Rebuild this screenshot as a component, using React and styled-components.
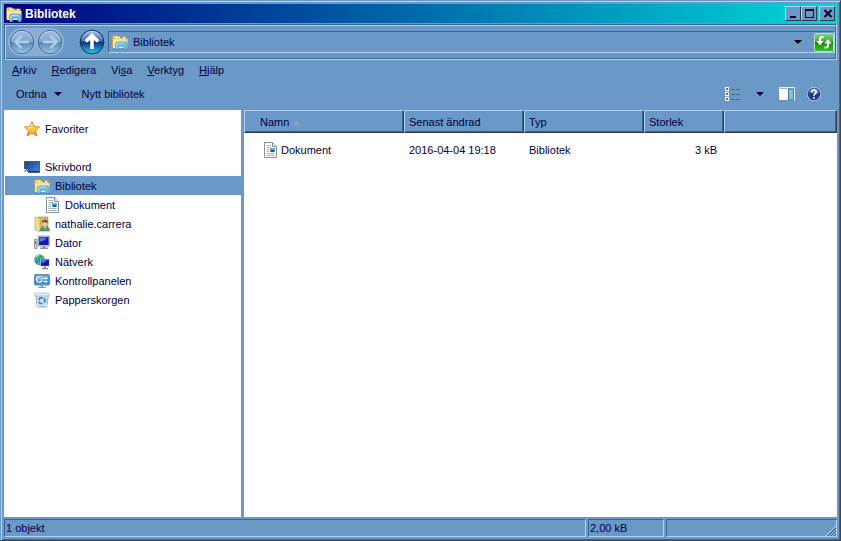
import React, { useState } from 'react';
import styled, { createGlobalStyle } from 'styled-components';

//////////////////////////////////////////////////

const FolderIcon = ({ size = 16 }) => (
  <svg width={size} height={size} viewBox="0 0 16 16" aria-hidden="true">
    <path d="M.5 2.5 L1.5 1.5 H6 L7.5 3 H14.5 V13 H.5 Z" fill="#e3c567" stroke="#b99a45" strokeWidth=".6" />
    <path d="M1 5 H15.5 V14 H1 Z" fill="#f6e79d" />
    <path d="M3 3.5 H13" stroke="#fffbe0" strokeWidth="1.2" />
    <path d="M8 3.5 H11" stroke="#5aa55a" strokeWidth="1" />
    <path d="M3.5 15.5 V10.5 Q3.5 8 6 8 H12.5 Q15 8 15 10.5 V15.5 H12 V12 H6.5 V15.5 Z" fill="#6fc0ea" stroke="#3f92c4" strokeWidth=".7" />
    <path d="M4.7 14.5 V11 Q4.8 9.2 7 9.2 H12" fill="none" stroke="#d6f1ff" strokeWidth=".8" />
  </svg>
);

const DocumentIcon = () => (
  <svg width="16" height="16" viewBox="0 0 16 16" aria-hidden="true">
    <path d="M2.5 .5 H10.5 L14.5 4.5 V15.5 H2.5 Z" fill="#fff" stroke="#8a8f94" />
    <path d="M10.5 .5 V4.5 H14.5" fill="#dfe5ea" stroke="#8a8f94" />
    <path d="M4.5 3.5 H9 M4.5 5.5 H9 M4.5 7.5 H7 M4.5 9.5 H7 M4.5 11.5 H12.5 M4.5 13.5 H12.5" stroke="#9fb2bd" />
    <path d="M8 6 H13 V10 H8 Z" fill="#5ba7df" />
    <path d="M9 8 H12 V10 H9 Z" fill="#1d5493" />
  </svg>
);

const StarIcon = () => (
  <svg width="16" height="16" viewBox="0 0 16 16" aria-hidden="true">
    <defs>
      <linearGradient id="star" x1="0" y1="0" x2="0" y2="1">
        <stop offset="0" stopColor="#ffe36a" />
        <stop offset=".5" stopColor="#ffcf45" />
        <stop offset="1" stopColor="#f48a16" />
      </linearGradient>
    </defs>
    <path d="M8 .7 L10.1 5.6 L15.5 6 L11.5 9.6 L13 15 L8 12.1 L3.2 15 L4.5 9.6 L.5 6 L5.9 5.6 Z" fill="url(#star)" stroke="#d77c18" strokeWidth=".9" strokeLinejoin="round" />
    <path d="M8 3 L6.8 6.7 L3.5 7" fill="none" stroke="#fff5b8" />
  </svg>
);

const DesktopIcon = () => (
  <svg width="16" height="16" viewBox="0 0 16 16" aria-hidden="true">
    <defs>
      <linearGradient id="desktop" x1="0" y1="0" x2="1" y2="1">
        <stop offset="0" stopColor="#1b3f86" />
        <stop offset=".55" stopColor="#2f65b4" />
        <stop offset="1" stopColor="#5a94d8" />
      </linearGradient>
    </defs>
    <path d="M.5 2.5 H15.5 V13.5 H.5 Z" fill="url(#desktop)" stroke="#4d5a70" />
    <path d="M1 12 H15 V13 H1 Z" fill="#2f3a52" />
    <path d="M0 10 H4 V14 H0 Z" fill="#e4f3fc" />
    <path d="M1 13 V12 L3 10.5 M1.5 10.5 H3.5 V12.5" fill="none" stroke="#1f7cc2" />
  </svg>
);

const UserIcon = () => (
  <svg width="16" height="16" viewBox="0 0 16 16" aria-hidden="true">
    <path d="M4 1 H14 V14 H4 Z" fill="#cdb665" stroke="#a58c3d" strokeWidth=".6" />
    <path d="M1 1 L6 2.5 V15.7 L1 14 Z" fill="#f2df8a" stroke="#c6a94b" strokeWidth=".7" />
    <path d="M6.5 15 Q6.5 10.5 10.8 10.5 Q15.5 10.5 15.5 15 Z" fill="#4c9b77" stroke="#2f7257" strokeWidth=".5" />
    <circle cx="10.8" cy="7.3" r="2.7" fill="#f0c49b" />
    <path d="M8 7.5 Q7.5 3.8 10.8 3.8 Q14.2 3.8 13.7 7.2 Q11.5 6.8 10 5.8 Z" fill="#71502e" />
    <path d="M9.8 10.5 H12 L11 13 Z" fill="#fff" />
  </svg>
);

const ComputerIcon = () => (
  <svg width="16" height="16" viewBox="0 0 16 16" aria-hidden="true">
    <path d="M.5 4.5 H3 V13.5 H.5 Z" fill="#cfd4d8" stroke="#7b8389" strokeWidth=".8" />
    <path d="M1 6 H2.5 V9 H1 Z" fill="#46b34a" />
    <path d="M4 1 H15.6 V11 H4 Z" fill="#c7cfda" stroke="#8d98a8" strokeWidth=".8" />
    <path d="M5 2 H14.6 V10 H5 Z" fill="#1717a8" />
    <path d="M5.5 2.5 H13 Q11 6 5.5 7 Z" fill="#5b74ea" />
    <path d="M8.5 11 H11.5 V12.5 H14 V14 H6 V12.5 H8.5 Z" fill="#8793a1" />
  </svg>
);

const NetworkIcon = () => (
  <svg width="16" height="16" viewBox="0 0 16 16" aria-hidden="true">
    <circle cx="5.5" cy="5.7" r="5.2" fill="#268dd3" />
    <path d="M.8 4 Q2 1 5 .6 L7 1.5 L5 4 L4 6.5 L1.5 6 Z M4 8 L6.5 8 L6 10.8 Q4 10.8 3 9.8 Z M8 1.5 L10 3 L9 5 L7 4 Z" fill="#42b857" />
    <path d="M2 2.8 Q3.5 1.5 5 1.5" fill="none" stroke="#c7f2ff" />
    <path d="M6 4.8 H15.6 V12.6 H6 Z" fill="#cad2df" />
    <path d="M6.8 5.5 H14.9 V11.8 H6.8 Z" fill="#1016a0" />
    <path d="M7.3 6 H13 Q11 9 7.3 9.6 Z" fill="#4e75e5" />
    <path d="M10 12.6 H12 V14 H14 V15.3 H8 V14 H10 Z" fill="#7f8b99" />
  </svg>
);

const ControlIcon = () => (
  <svg width="16" height="16" viewBox="0 0 16 16" aria-hidden="true">
    <rect x=".5" y="1.5" width="15" height="10.5" rx="1" fill="#3b91cf" stroke="#6b8dac" />
    <path d="M1.5 2.5 H14.5 V5 Q8 5 1.5 8 Z" fill="#6db6e4" />
    <circle cx="5.3" cy="6.5" r="2.6" fill="none" stroke="#f4fbff" strokeWidth="1.2" />
    <path d="M5.3 6.5 V3.5 A3 3 0 0 1 8 6.5 Z" fill="#f4a63a" />
    <path d="M9.5 5.5 H13.5 M9.5 8.5 H13.5" stroke="#fff" strokeWidth="1.3" />
    <path d="M6.5 12.5 H9.5 V14 H12 V15 H4 V14 H6.5 Z" fill="#8b9aa8" />
  </svg>
);

const BinIcon = () => (
  <svg width="16" height="16" viewBox="0 0 16 16" aria-hidden="true">
    <path d="M1.5 2.5 H14.5 L12.7 15 H3.3 Z" fill="#cfe0ee" stroke="#8da5b8" strokeWidth=".9" />
    <path d="M.8 1.8 L4 .8 L7 2 L10 .8 L15.2 2 L14.5 4 H1.5 Z" fill="#eef6fb" stroke="#91a7b8" strokeWidth=".7" />
    <path d="M4.8 8 L6 5.8 H8.8 M10 6 L11.2 8.5 L10 10.5 M8.5 11.5 H6 L4.8 9.8" fill="none" stroke="#2f86cf" strokeWidth="1.7" />
    <path d="M3.6 12 L4 14.5 M12.3 12 L12 14.5" stroke="#fff" />
  </svg>
);

const OrbIcon = ({ active, dir }) => {
  const id = `orb-${dir}`;
  const turn = { left: 0, right: 180, up: 90 }[dir];
  return (
    <svg width="28" height="28" viewBox="0 0 28 28" aria-hidden="true">
      <defs>
        <linearGradient id={id} x1="0" y1="0" x2="0" y2="1">
          <stop offset="0" stopColor={active ? '#a9c8ec' : '#a2bede'} />
          <stop offset=".48" stopColor={active ? '#2d62ae' : '#82a7d0'} />
          <stop offset=".5" stopColor={active ? '#0c2c77' : '#5784b6'} />
          <stop offset="1" stopColor={active ? '#1ed0f7' : '#9cc5e8'} />
        </linearGradient>
      </defs>
      <circle cx="14" cy="14" r="13" fill={active ? '#5680b0' : '#8caed3'} stroke={active ? '#7fa3cd' : '#a5c0df'} strokeWidth=".7" />
      <circle cx="14" cy="14" r="11.8" fill={`url(#${id})`} stroke={active ? '#123467' : '#476b96'} />
      <path d="M4.5 11 Q7 3.5 14 3.5 Q21 3.5 23.5 11" fill="none" stroke="#d0e1f2" strokeOpacity=".55" />
      <path
        d="M21 14 H8 M13.5 7.8 L7.5 14 L13.5 20.2"
        fill="none"
        stroke={active ? '#fff' : '#b5cce6'}
        strokeWidth={active ? 3.5 : 2.4}
        transform={`rotate(${turn} 14 14)`}
      />
    </svg>
  );
};

const Caret = ({ color = '#000040' }) => (
  <svg width="8" height="4" viewBox="0 0 8 4" aria-hidden="true">
    <path d="M0 0 H8 L4 4 Z" fill={color} />
  </svg>
);

const RefreshIcon = () => (
  <svg width="20" height="19" viewBox="0 0 20 19" aria-hidden="true">
    <defs>
      <linearGradient id="refresh" x1="0" y1="0" x2="0" y2="1">
        <stop offset="0" stopColor="#8fd08a" />
        <stop offset=".45" stopColor="#48a83e" />
        <stop offset=".5" stopColor="#168b12" />
        <stop offset="1" stopColor="#3fbd2f" />
      </linearGradient>
    </defs>
    <rect x=".5" y=".5" width="19" height="18" rx="1" fill="url(#refresh)" stroke="#b8e0bd" />
    <path d="M9.5 4 H8 Q6 4 6 6.5 V9 M10.5 14.5 H12 Q14 14.5 14 12 V9.5" fill="none" stroke="#fff" strokeWidth="2" />
    <path d="M2.3 8 H9.7 L6 12.3 Z M10.3 10.5 H17.7 L14 6.2 Z" fill="#fff" />
  </svg>
);

const ViewIcon = () => (
  <svg width="16" height="14" viewBox="0 0 16 14" aria-hidden="true">
    <path d="M0 0 H4 V14 H0 Z" fill="#fff" />
    <path d="M1 1 H3 V3 H1 Z M1 6 H3 V8 H1 Z M1 11 H3 V13 H1 Z" fill="#58738f" />
    <path d="M0 4.5 H4 M0 9.5 H4" stroke="#91a9c2" />
    <path d="M6 2.5 H10 M11 2.5 H15 M6 7.5 H10 M11 7.5 H15 M6 12.5 H10 M11 12.5 H15" stroke="#4d6680" />
  </svg>
);

const PaneIcon = () => (
  <svg width="16" height="14" viewBox="0 0 16 14" aria-hidden="true">
    <path d="M.5 .5 H15.5 V13.5 H.5 Z" fill="#fff" stroke="#e9eff5" />
    <path d="M1 1.5 H15" stroke="#9fb4c8" />
    <path d="M9.5 2 H14.5 V13 H9.5 Z" fill="#7fc0dc" stroke="#3e7c9c" />
    <path d="M0 13.5 H15" stroke="#7390ab" />
  </svg>
);

const HelpIcon = () => (
  <svg width="16" height="16" viewBox="0 0 16 16" aria-hidden="true">
    <circle cx="8" cy="8" r="7.5" fill="#c4d0df" stroke="#7286a0" strokeWidth=".7" />
    <circle cx="8" cy="8" r="6.3" fill="#203c92" />
    <path d="M2.8 7 Q4 2.3 8 2.3 Q12 2.3 13.2 7 Z" fill="#6380bd" />
    <path d="M5.8 6.2 Q5.8 4 8 4 Q10.2 4 10.2 5.9 Q10.2 7 8.9 7.8 Q8 8.4 8 9.8 M8 11 V12.8" fill="none" stroke="#fff" strokeWidth="1.6" />
  </svg>
);

//////////////////////////////////////////////////

const places = [
  { name: 'Skrivbord', icon: <DesktopIcon />, level: 0 },
  { name: 'Bibliotek', icon: <FolderIcon />, level: 1 },
  { name: 'Dokument', icon: <DocumentIcon />, level: 2 },
  { name: 'nathalie.carrera', icon: <UserIcon />, level: 1 },
  { name: 'Dator', icon: <ComputerIcon />, level: 1 },
  { name: 'Nätverk', icon: <NetworkIcon />, level: 1 },
  { name: 'Kontrollpanelen', icon: <ControlIcon />, level: 1 },
  { name: 'Papperskorgen', icon: <BinIcon />, level: 1 },
];

const menus = [
  ['', 'A', 'rkiv'],
  ['', 'R', 'edigera'],
  ['Vi', 's', 'a'],
  ['', 'V', 'erktyg'],
  ['', 'H', 'jälp'],
];

const files = [
  { name: 'Dokument', changed: '2016-04-04 19:18', type: 'Bibliotek', size: '3 kB' },
];

const App = () => {
  const [selected, setSelected] = useState('Bibliotek');
  const [address, setAddress] = useState('Bibliotek');

  return (
    <>
      <GlobalStyle />
      <Window>
        <TitleBar>
          <FolderIcon />
          <Title>Bibliotek</Title>
          <TitleButton aria-label="Minimera">
            <svg width="12" height="11" viewBox="0 0 12 11"><path d="M2 8 H8 V10 H2 Z" fill="#000040" /></svg>
          </TitleButton>
          <TitleButton aria-label="Maximera">
            <svg width="12" height="11" viewBox="0 0 12 11"><path d="M1 1 H10 V10 H1 Z M2 3 V9 H9 V3 Z" fill="#000040" fillRule="evenodd" /></svg>
          </TitleButton>
          <TitleButton aria-label="Stäng" $apart>
            <svg width="12" height="11" viewBox="0 0 12 11"><path d="M2.5 2 L9.5 9 M9.5 2 L2.5 9" stroke="#000040" strokeWidth="2" /></svg>
          </TitleButton>
        </TitleBar>

        <NavBar>
          <History>
            <OrbButton aria-label="Bakåt" disabled><OrbIcon dir="left" /></OrbButton>
            <OrbButton aria-label="Framåt" disabled><OrbIcon dir="right" /></OrbButton>
          </History>
          <OrbButton aria-label="Upp"><OrbIcon dir="up" active /></OrbButton>
          <Address>
            <FolderIcon />
            <AddressInput
              aria-label="Adress"
              value={address}
              onChange={e => setAddress(e.target.value)}
            />
            <IconButton aria-label="Tidigare platser" $wide><Caret color="#000" /></IconButton>
            <IconButton aria-label="Uppdatera"><RefreshIcon /></IconButton>
          </Address>
        </NavBar>

        <MenuBar>
          {menus.map(([before, key, after]) => (
            <MenuButton key={key + after}>{before}<u>{key}</u>{after}</MenuButton>
          ))}
        </MenuBar>

        <CommandBar>
          <CommandButton>Ordna <Caret /></CommandButton>
          <CommandButton>Nytt bibliotek</CommandButton>
          <CommandIcons>
            <IconButton aria-label="Ändra vy"><ViewIcon /></IconButton>
            <IconButton aria-label="Fler alternativ"><Caret /></IconButton>
            <IconButton aria-label="Visa förhandsgranskning"><PaneIcon /></IconButton>
            <IconButton aria-label="Hjälp"><HelpIcon /></IconButton>
          </CommandIcons>
        </CommandBar>

        <Content>
          <Sidebar aria-label="Platser">
            <PlaceList>
              <li><Place href="#favoriter" $level={0}><StarIcon />Favoriter</Place></li>
            </PlaceList>
            <PlaceList>
              {places.map(place => (
                <li key={place.name}>
                  <Place
                    href={`#${place.name}`}
                    $level={place.level}
                    $selected={place.name === selected}
                    onClick={() => setSelected(place.name)}
                  >
                    {place.icon}{place.name}
                  </Place>
                </li>
              ))}
            </PlaceList>
          </Sidebar>

          <FileArea>
            <FileTable>
              <colgroup>
                <Col $width={160} />
                <Col $width={120} />
                <Col $width={120} />
                <Col $width={80} />
                <col />
              </colgroup>
              <thead>
                <tr>
                  <HeadCell $first>
                    Namn
                    <SortMark width="7" height="4" viewBox="0 0 7 4"><path d="M0 4 L3.5 0 L7 4 Z" fill="#93a3b5" /></SortMark>
                  </HeadCell>
                  <HeadCell>Senast ändrad</HeadCell>
                  <HeadCell>Typ</HeadCell>
                  <HeadCell>Storlek</HeadCell>
                  <HeadCell />
                </tr>
              </thead>
              <tbody>
                {files.map(file => (
                  <tr key={file.name}>
                    <Cell><FileName><DocumentIcon />{file.name}</FileName></Cell>
                    <Cell>{file.changed}</Cell>
                    <Cell>{file.type}</Cell>
                    <Cell $right>{file.size}</Cell>
                    <Cell />
                  </tr>
                ))}
              </tbody>
            </FileTable>
          </FileArea>
        </Content>

        <StatusBar>
          <StatusPane>1 objekt</StatusPane>
          <StatusPane $width={76}>2,00 kB</StatusPane>
          <StatusPane $width={171} $grip>
            <svg width="10" height="10" viewBox="0 0 10 10" aria-hidden="true">
              <path d="M0 10 L10 0 V10 Z" fill="#6a99c8" />
              <path d="M0 10 L10 0" stroke="#b4d3f1" />
              <path d="M2 10 L10 2 M5 10 L10 5 M8 10 L10 8" stroke="#234a78" />
              <path d="M3.5 10 L10 3.5 M6.5 10 L10 6.5" stroke="#b4d3f1" />
            </svg>
          </StatusPane>
        </StatusBar>
      </Window>
    </>
  );
};

//////////////////////////////////////////////////

const GlobalStyle = createGlobalStyle`
  * {
    box-sizing: border-box;
  }
  body {
    margin: 0;
  }
  body, button, input, table {
    font-family: "Liberation Sans", Arial, sans-serif;
    font-size: 11px;
    line-height: 14px;
    color: #000040;
  }
  button {
    padding: 0;
    border: 0;
    background: none;
  }
  svg {
    display: block;
    flex: none;
  }
`;

const Window = styled.div`
  display: flex;
  flex-direction: column;
  min-height: 100vh;
  padding: 3px;
  background: #6a99c8;
  border: 1px solid;
  border-color: #6a99c8 #3c4654 #3c4654 #6a99c8;
  box-shadow: inset 1px 1px #b4d3f1, inset -1px -1px #3b6594;
`;

const TitleBar = styled.header`
  display: flex;
  align-items: center;
  height: 19px;
  padding: 0 2px;
  background: linear-gradient(to right, #000080, #00d8d8);
`;

const Title = styled.h1`
  flex: 1;
  margin: 0 0 0 3px;
  font-size: 12px;
  line-height: 16px;
  font-weight: bold;
  color: #fff;
`;

const TitleButton = styled.button`
  width: 16px;
  height: 15px;
  padding: 1px 2px;
  margin-left: ${p => (p.$apart ? '2px' : '0')};
  background: #6a99c8;
  border: 1px solid;
  border-color: #b4d3f1 #303a48 #303a48 #b4d3f1;
`;

const NavBar = styled.nav`
  display: flex;
  align-items: center;
  height: 36px;
  margin-top: 1px;
  padding: 0 1px 0 3px;
  border: 1px solid;
  border-color: #3b6594 #b4d3f1 #b4d3f1 #3b6594;
  box-shadow: inset 1px 1px #b4d3f1, inset -1px -1px #3b6594;
`;

const History = styled.div`
  display: flex;
  margin-right: 14px;
  border-radius: 14px;
  background: #8aacd1;
`;

const OrbButton = styled.button`
  width: 28px;
  height: 28px;
`;

const Address = styled.div`
  display: flex;
  flex: 1;
  align-items: center;
  gap: 5px;
  height: 22px;
  margin-left: 2px;
  padding-left: 3px;
  border: 1px solid;
  border-color: #3b6594 #b4d3f1 #b4d3f1 #3b6594;
`;

const AddressInput = styled.input`
  flex: 1;
  min-width: 0;
  padding: 0;
  border: 0;
  background: none;
  outline: none;
`;

const IconButton = styled.button`
  display: flex;
  align-items: center;
  justify-content: center;
  min-width: ${p => (p.$wide ? 22 : 16)}px;
`;

const MenuBar = styled.div`
  display: flex;
  gap: 15px;
  padding: 3px 8px;
`;

const MenuButton = styled.button`
  height: 14px;
`;

const CommandBar = styled.div`
  display: flex;
  align-items: center;
  gap: 20px;
  height: 30px;
  padding: 0 15px 2px 12px;
`;

const CommandButton = styled.button`
  display: flex;
  align-items: center;
  gap: 7px;
`;

const CommandIcons = styled.div`
  display: flex;
  align-items: center;
  gap: 11px;
  margin-left: auto;
`;

const Content = styled.main`
  display: flex;
  flex: 1;
  gap: 3px;
`;

const Sidebar = styled.nav`
  width: 237px;
  padding-top: 9px;
  background: #fff;
`;

const PlaceList = styled.ul`
  margin: 0 0 19px;
  padding: 0;
  list-style: none;
`;

const Place = styled.a`
  display: flex;
  align-items: center;
  gap: 5px;
  height: 19px;
  margin-left: 1px;
  padding-left: ${p => 19 + p.$level * 10}px;
  color: #000040;
  text-decoration: none;
  background: ${p => (p.$selected ? '#6a99c8' : 'none')};
`;

const FileArea = styled.section`
  flex: 1;
  min-width: 0;
  background: #fff;
`;

const FileTable = styled.table`
  width: 100%;
  table-layout: fixed;
  border-spacing: 0;

  tbody::before {
    content: '';
    display: block;
    height: 7px;
  }
`;

const Col = styled.col`
  width: ${p => p.$width}px;
`;

const HeadCell = styled.th`
  height: 23px;
  padding: 0 0 0 ${p => (p.$first ? 15 : 4)}px;
  text-align: left;
  font-weight: normal;
  background: #6a99c8;
  border: 1px solid;
  border-color: #b4d3f1 #303a48 #303a48 #b4d3f1;
  box-shadow: inset -1px -1px #3b6594;
`;

const SortMark = styled.svg`
  display: inline-block;
  margin-left: 4px;
  vertical-align: middle;
`;

const Cell = styled.td`
  height: 19px;
  padding: 0 7px 0 5px;
  text-align: ${p => (p.$right ? 'right' : 'left')};
`;

const FileName = styled.span`
  display: flex;
  align-items: center;
  gap: 3px;
  padding-left: 13px;
`;

const StatusBar = styled.footer`
  display: flex;
  gap: 2px;
  margin-top: 2px;
`;

const StatusPane = styled.div`
  display: flex;
  flex: ${p => (p.$width ? `0 0 ${p.$width}px` : 1)};
  align-items: ${p => (p.$grip ? 'flex-end' : 'center')};
  justify-content: ${p => (p.$grip ? 'flex-end' : 'flex-start')};
  height: 18px;
  padding-left: 1px;
  border: 1px solid;
  border-color: #3b6594 #b4d3f1 #b4d3f1 #3b6594;
`;

//////////////////////////////////////////////////

export default App;
